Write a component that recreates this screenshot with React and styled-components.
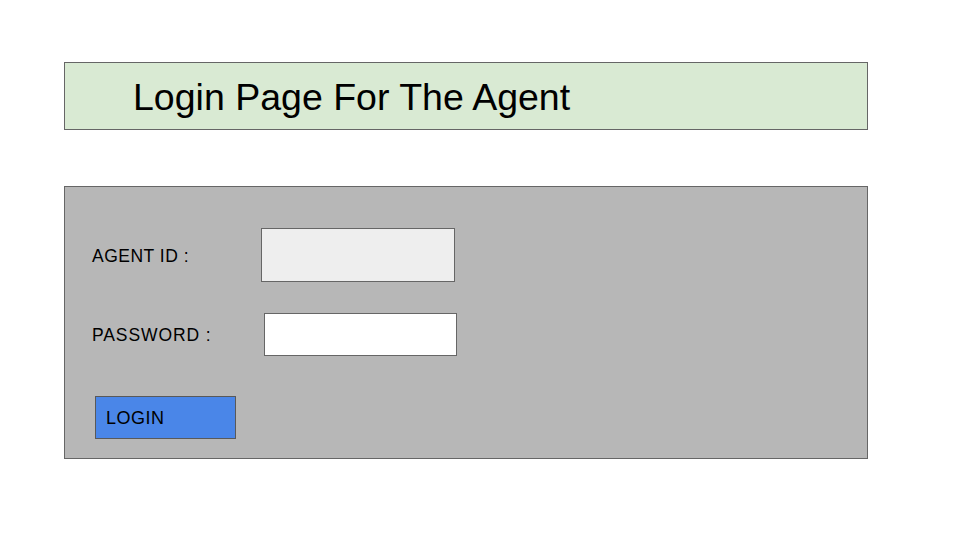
import React from "react";
import styled, { createGlobalStyle } from "styled-components";

const Global = createGlobalStyle`
  html, body {
    margin: 0;
    padding: 0;
    background: #ffffff;
    font-family: "Liberation Sans", Arial, sans-serif;
  }
`;

const Page = styled.div`
  width: 960px;
  height: 540px;
  padding: 62px 0 0 64px;
  box-sizing: border-box;
  display: flex;
  flex-direction: column;
  gap: 56px;
`;

const Header = styled.div`
  width: 804px;
  height: 68px;
  box-sizing: border-box;
  background: #d9ead3;
  border: 1px solid #666666;
  display: flex;
  align-items: center;
  padding: 2px 0 0 68px;
`;

const Title = styled.h1`
  margin: 0;
  font-weight: normal;
  font-size: 37.5px;
  color: #000;
`;

const Panel = styled.div`
  width: 804px;
  height: 273px;
  box-sizing: border-box;
  background: #b7b7b7;
  border: 1px solid #666666;
  padding: 41px 0 0 27px;
  display: flex;
  flex-direction: column;
  gap: 31px;
`;

const Row = styled.div`
  display: flex;
  align-items: center;
`;

const Label = styled.label`
  width: ${(p) => p.$width}px;
  padding-top: 2px;
  font-size: 17.5px;
  letter-spacing: ${(p) => p.$spacing}px;
  color: #000;
`;

const Field = styled.input`
  width: ${(p) => p.$w}px;
  height: ${(p) => p.$h}px;
  box-sizing: border-box;
  border: 1px solid #666666;
  background: ${(p) => p.$bg};
  padding: 0 8px;
  margin: 0;
  outline: none;
  font-family: inherit;
  font-size: 16px;
`;

const LoginButton = styled.button`
  margin: 9px 0 0 3px;
  width: 141px;
  height: 43px;
  box-sizing: border-box;
  background: #4a86e8;
  border: 1px solid #595959;
  text-align: left;
  padding: 2px 0 0 10px;
  font-family: inherit;
  font-size: 18px;
  letter-spacing: 0.5px;
  color: #000;
`;

export default function App() {
  return (
    <>
      <Global />
      <Page>
        <Header>
          <Title>Login Page For The Agent</Title>
        </Header>
        <Panel>
          <Row>
            <Label $width={169} $spacing={0.5}>AGENT ID :</Label>
            <Field $w={194} $h={54} $bg="#eeeeee" />
          </Row>
          <Row>
            <Label $width={172} $spacing={0.9}>PASSWORD :</Label>
            <Field type="password" $w={193} $h={43} $bg="#ffffff" />
          </Row>
          <div>
            <LoginButton>LOGIN</LoginButton>
          </div>
        </Panel>
      </Page>
    </>
  );
}
